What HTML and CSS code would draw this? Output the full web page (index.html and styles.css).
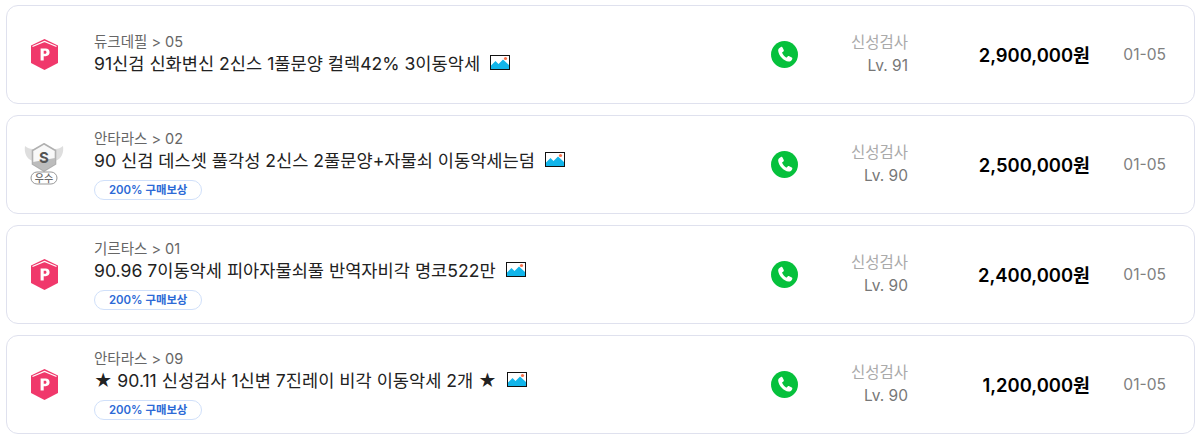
FILE: index.html
```html
<!DOCTYPE html>
<html lang="ko">
<head>
    <meta charset="UTF-8">
    <title>매물 목록</title>
    <link rel="stylesheet" href="styles.css">
</head>
<body>
    <svg class="defs" width="0" height="0">
        <symbol id="seller-p" viewBox="0 0 27 31">
            <path d="M13.5 0 L27 6.6 V24 L13.5 31 L0 24 V6.6 Z" fill="#f0386b"/>
            <path d="M1.5 7.6 L13.5 2.4 L25.5 7.6" fill="none" stroke="#fff" stroke-width="1.1"/>
            <path d="M9.6 21.6 V9.4 H14.6 C17.2 9.4 18.6 11 18.6 13.3 C18.6 15.6 17.2 17.2 14.6 17.2 H12.7 V21.6 Z M12.7 14.8 H14.2 C15 14.8 15.5 14.2 15.5 13.3 C15.5 12.4 15 11.8 14.2 11.8 H12.7 Z" fill="#fff"/>
        </symbol>
        <symbol id="phone" viewBox="0 0 26 26">
            <circle cx="13" cy="13" r="13" fill="#06c13c"/>
            <path d="M9.6 5.7 C10.2 5.4 10.8 5.6 11.1 6.2 L12.3 8.7 C12.5 9.2 12.4 9.7 12 10 L10.9 10.9 C10.7 11.1 10.7 11.3 10.8 11.6 C11.6 13.3 12.8 14.7 14.5 15.8 C14.8 16 15 16 15.2 15.8 L16.2 14.8 C16.6 14.4 17.1 14.4 17.6 14.6 L20 16 C20.6 16.3 20.7 16.9 20.4 17.5 C19.7 19 18.4 20 16.9 19.8 C12.2 19.2 7.4 14 6.9 9.3 C6.8 7.8 8 6.4 9.6 5.7 Z" fill="#fff"/>
        </symbol>
        <symbol id="photo" viewBox="0 0 20 15">
            <rect x="0.5" y="0.5" width="19" height="14" fill="#fff" stroke="#111"/>
            <path d="M1 14 V10.5 L5.5 6 L8.5 9 L13 4.5 L19 10 V14 Z" fill="#12b5ea"/>
            <circle cx="15.5" cy="3.5" r="1.6" fill="#f9714a"/>
        </symbol>
    </svg>

    <ul class="item-list">
        <li class="item">
            <svg class="seller-p"><use href="#seller-p"/></svg>
            <div class="info">
                <p class="server">듀크데필 &gt; 05</p>
                <p class="title">91신검 신화변신 2신스 1풀문양 컬렉42% 3이동악세 <svg class="photo"><use href="#photo"/></svg></p>
            </div>
            <svg class="phone"><use href="#phone"/></svg>
            <div class="level"><span>신성검사</span><span class="lv">Lv. 91</span></div>
            <div class="price">2,900,000원</div>
            <div class="date">01-05</div>
        </li>
        <li class="item">
            <svg class="seller-s" viewBox="0 0 40 42">
                <path d="M9 6 C6 6 3 5 1 3 C0 9 2 16 9 18 Z M31 6 C34 6 37 5 39 3 C40 9 38 16 31 18 Z" fill="#dedede"/>
                <path d="M20 0.8 L31.5 7.5 V21 L20 28 L8.5 21 V7.5 Z" fill="#f8f8f8" stroke="#b0b0b0" stroke-width="1.6"/>
                <path d="M9 19 L31 15 V21 L20 27.4 L9 21 Z" fill="#bcbcbc"/>
                <text x="20" y="20" text-anchor="middle" class="seller-s-letter">S</text>
                <rect x="7" y="29" width="26" height="12" rx="6" fill="#fff" stroke="#999" stroke-width="1"/>
                <text x="20" y="38.8" text-anchor="middle" class="seller-s-label">우수</text>
            </svg>
            <div class="info">
                <p class="server">안타라스 &gt; 02</p>
                <p class="title">90 신검 데스셋 풀각성 2신스 2풀문양+자물쇠 이동악세는덤 <svg class="photo"><use href="#photo"/></svg></p>
                <span class="reward">200% 구매보상</span>
            </div>
            <svg class="phone"><use href="#phone"/></svg>
            <div class="level"><span>신성검사</span><span class="lv">Lv. 90</span></div>
            <div class="price">2,500,000원</div>
            <div class="date">01-05</div>
        </li>
        <li class="item">
            <svg class="seller-p"><use href="#seller-p"/></svg>
            <div class="info">
                <p class="server">기르타스 &gt; 01</p>
                <p class="title">90.96 7이동악세 피아자물쇠풀 반역자비각 명코522만 <svg class="photo"><use href="#photo"/></svg></p>
                <span class="reward">200% 구매보상</span>
            </div>
            <svg class="phone"><use href="#phone"/></svg>
            <div class="level"><span>신성검사</span><span class="lv">Lv. 90</span></div>
            <div class="price">2,400,000원</div>
            <div class="date">01-05</div>
        </li>
        <li class="item">
            <svg class="seller-p"><use href="#seller-p"/></svg>
            <div class="info">
                <p class="server">안타라스 &gt; 09</p>
                <p class="title">★ 90.11 신성검사 1신변 7진레이 비각 이동악세 2개 ★ <svg class="photo"><use href="#photo"/></svg></p>
                <span class="reward">200% 구매보상</span>
            </div>
            <svg class="phone"><use href="#phone"/></svg>
            <div class="level"><span>신성검사</span><span class="lv">Lv. 90</span></div>
            <div class="price">1,200,000원</div>
            <div class="date">01-05</div>
        </li>
    </ul>
</body>
</html>
```

FILE: styles.css
```css
body {
    margin: 0;
    padding: 5px 6px 0;
    background: #fff;
    font-family: Inter, "Noto Sans CJK KR", sans-serif;
    color: #222;
}

.defs {
    position: absolute;
}

.item-list {
    list-style: none;
    margin: 0;
    padding: 0;
    display: flex;
    flex-direction: column;
    gap: 11px;
}

.item {
    display: grid;
    grid-template-columns: 87px 1fr 27px 110px 182px 76px 28px;
    align-items: center;
    height: 99px;
    box-sizing: border-box;
    padding-bottom: 1px;
    border: 1px solid #dfe1ee;
    border-radius: 12px;
}

.seller-p {
    width: 27px;
    height: 31px;
    margin-left: 24px;
}

.seller-s {
    width: 40px;
    height: 42px;
    margin-left: 17px;
}

.seller-s-letter {
    font: 700 15px Inter, sans-serif;
    fill: #555;
}

.seller-s-label {
    font: 500 10px "Noto Sans CJK KR", sans-serif;
    fill: #666;
}

.info {
    display: flex;
    flex-direction: column;
    align-items: flex-start;
}

.server {
    margin: 0;
    font-size: 14.5px;
    line-height: 20px;
    color: #666;
}

.title {
    margin: 0;
    font-size: 17.6px;
    line-height: 24px;
    color: #222;
}

.photo {
    width: 20px;
    height: 15px;
    margin-left: 5px;
}

.reward {
    margin-top: 7px;
    padding: 0 14px;
    border: 1px solid #d0e0fa;
    border-radius: 10px;
    font-size: 11.4px;
    line-height: 18px;
    font-weight: 600;
    color: #2d6ad6;
}

.phone {
    width: 27px;
    height: 27px;
}

.level {
    display: flex;
    flex-direction: column;
    align-items: flex-end;
    font-size: 15.5px;
    line-height: 23px;
    color: #aaa;
}

.lv {
    color: #777;
}

.price {
    text-align: right;
    font-size: 18.4px;
    font-weight: 600;
    color: #000;
}

.date {
    text-align: right;
    font-size: 15.6px;
    color: #808080;
}
```
